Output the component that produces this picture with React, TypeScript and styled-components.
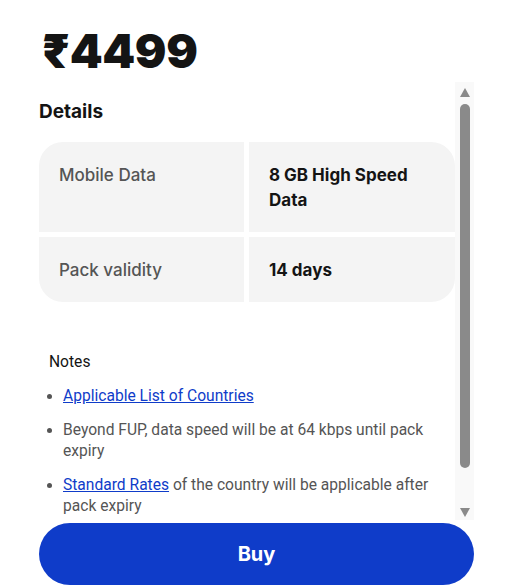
import React from 'react';
import styled, {createGlobalStyle} from 'styled-components';

const GlobalStyle = createGlobalStyle`
  body {
    margin: 0;
    background: #fff;
    font-family: Inter, "Noto Sans", sans-serif;
    color: #141414;
  }
`;

const Page = styled.main`
  width: 435px;
  padding: 26px 0 0 39px;
`;

const Price = styled.h1`
  margin: 0 0 6px 3px;
  font-size: 47px;
  font-weight: 900;
  line-height: 50px;
  letter-spacing: -0.4px;
  color: #141414;
`;

const Panel = styled.section`
  display: flex;
  height: 438px;
`;

const Content = styled.div`
  flex: 1;
  overflow: hidden;
  padding-top: 18px;
`;

const Heading = styled.h2`
  margin: 0;
  font-size: 19px;
  font-weight: 700;
  line-height: 24px;
`;

const Table = styled.div`
  display: grid;
  grid-template-columns: 205px 1fr;
  gap: 5px;
  margin-top: 18px;
  border-radius: 24px;
  overflow: hidden;
`;

const Cell = styled.div<{ $value?: boolean }>`
  background: #f4f4f4;
  padding: 21px 20px 19px;
  font-size: 17px;
  line-height: 25px;
  font-weight: ${(p) => (p.$value ? 700 : 500)};
  color: ${(p) => (p.$value ? '#141414' : '#555555')};
`;

const Notes = styled.div`
  margin: 50px 0 0 10px;
  font-family: Roboto, "Liberation Sans", sans-serif;
  font-size: 15.6px;
  line-height: 20.5px;
`;

const NotesTitle = styled.div`
  color: #141414;
`;

const List = styled.ul`
  margin: 13px 0 0;
  padding-left: 14px;
  color: #555555;

  li + li {
    margin-top: 14px;
  }

  li::marker {
    color: #555555;
  }
`;

const Link = styled.a`
  color: #0f3cc9;
  text-decoration: underline;
`;

const Track = styled.div`
  width: 19px;
  background: #f9f9f9;
  display: flex;
  flex-direction: column;
  align-items: center;
  padding: 6px 0 3px;
  box-sizing: border-box;
`;

const Arrow = styled.svg`
  width: 10px;
  height: 9px;
  fill: #8a8a8a;
`;

const Thumb = styled.div`
  width: 10px;
  height: 364px;
  margin-top: 7px;
  border-radius: 5px;
  background: #8a8a8a;
`;

const Spacer = styled.div`
  flex: 1;
`;

const BuyButton = styled.button`
  display: block;
  width: 435px;
  height: 62px;
  margin-top: 3px;
  border: none;
  border-radius: 31px;
  background: #0f3cc9;
  color: #fff;
  font-family: Inter, "Noto Sans", sans-serif;
  font-size: 20px;
  font-weight: 700;
  cursor: pointer;
`;

const details = [
  {label: 'Mobile Data', value: '8 GB High Speed Data'},
  {label: 'Pack validity', value: '14 days'},
];

export default function App() {
  return (
    <>
      <GlobalStyle/>
      <Page>
        <Price>₹4499</Price>
        <Panel>
          <Content>
            <Heading>Details</Heading>
            <Table>
              {details.map((d) => (
                <React.Fragment key={d.label}>
                  <Cell>{d.label}</Cell>
                  <Cell $value>{d.value}</Cell>
                </React.Fragment>
              ))}
            </Table>
            <Notes>
              <NotesTitle>Notes</NotesTitle>
              <List>
                <li><Link href="#">Applicable List of Countries</Link></li>
                <li>Beyond FUP, data speed will be at 64 kbps until pack expiry</li>
                <li><Link href="#">Standard Rates</Link> of the country will be applicable after pack expiry</li>
              </List>
            </Notes>
          </Content>
          <Track>
            <Arrow viewBox="0 0 10 9"><path d="M5 0 L10 9 L0 9 Z"/></Arrow>
            <Thumb/>
            <Spacer/>
            <Arrow viewBox="0 0 10 9"><path d="M0 0 L10 0 L5 9 Z"/></Arrow>
          </Track>
        </Panel>
        <BuyButton>Buy</BuyButton>
      </Page>
    </>
  );
}
